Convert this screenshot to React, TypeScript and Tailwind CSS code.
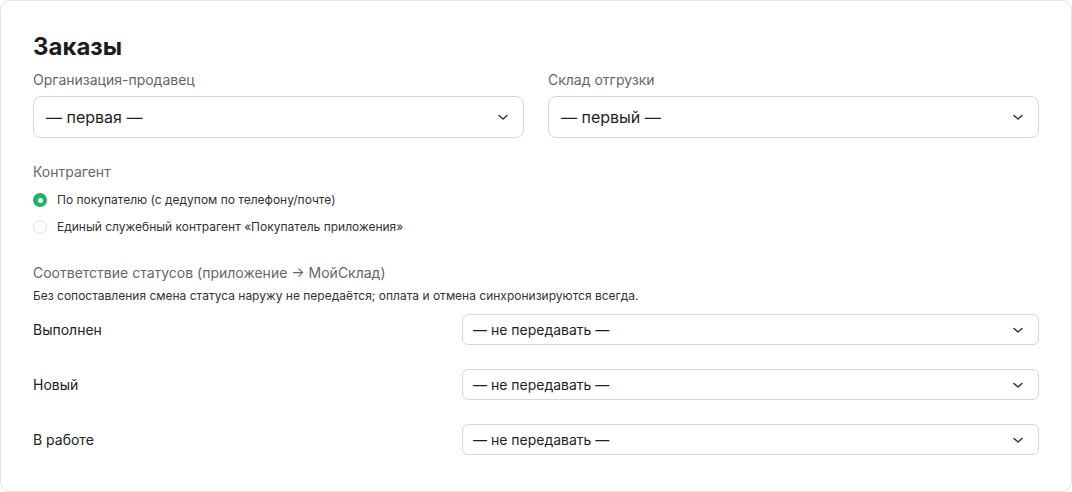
import { useState } from "react";

const Chevron = () => (
  <svg
    className="h-3 w-3 shrink-0 text-[#333]"
    viewBox="0 0 12 12"
    fill="none"
    stroke="currentColor"
    strokeWidth={1.5}
    strokeLinecap="round"
    strokeLinejoin="round"
  >
    <path d="M2 4.5l4 3.5 4-3.5" />
  </svg>
);

type SelectProps = {
  value: string;
  size?: "lg" | "sm";
};

// Имитация нативного селекта
const FakeSelect = ({ value, size = "lg" }: SelectProps) => (
  <div
    className={
      size === "lg"
        ? "flex h-[42px] items-center justify-between rounded-lg border border-[#d6d6d6] bg-white pl-3 pr-[14px] text-base text-[#1f1f1f]"
        : "flex h-[31px] items-center justify-between rounded-md border border-[#d6d6d6] bg-white pl-[10px] pr-[14px] text-sm text-[#1f1f1f]"
    }
  >
    <span>{value}</span>
    <Chevron />
  </div>
);

const Radio = ({
  checked,
  label,
  onClick,
}: {
  checked: boolean;
  label: string;
  onClick: () => void;
}) => (
  <button
    type="button"
    onClick={onClick}
    className="flex h-5 items-center gap-[10px] text-left text-xs text-[#333]"
  >
    {checked ? (
      <span className="flex h-[14px] w-[14px] items-center justify-center rounded-full bg-[#1fb463]">
        <span className="h-[5px] w-[5px] rounded-full bg-white" />
      </span>
    ) : (
      <span className="h-[14px] w-[14px] rounded-full border border-[#e2e2e2] bg-white" />
    )}
    <span>{label}</span>
  </button>
);

const statuses = ["Выполнен", "Новый", "В работе"];

export default function App() {
  const [counterparty, setCounterparty] = useState<"buyer" | "single">("buyer");

  return (
    <div className="font-['Inter','Noto_Sans',sans-serif] antialiased">
      <div className="h-[492px] w-[1072px] rounded-[10px] border border-[#e4e4e4] bg-white px-8 pt-[30px]">
        <h1 className="text-2xl leading-8 font-bold text-[#1c1c1c]">Заказы</h1>

        {/* Организация и склад */}
        <div className="mt-[7px] grid grid-cols-2 gap-x-6">
          <div>
            <div className="text-sm leading-5 text-[#666]">Организация-продавец</div>
            <div className="mt-[6px]">
              <FakeSelect value="— первая —" />
            </div>
          </div>
          <div>
            <div className="text-sm leading-5 text-[#666]">Склад отгрузки</div>
            <div className="mt-[6px]">
              <FakeSelect value="— первый —" />
            </div>
          </div>
        </div>

        {/* Контрагент */}
        <div className="mt-6">
          <div className="text-sm leading-5 text-[#666]">Контрагент</div>
          <div className="mt-[8px] flex flex-col gap-[7px]">
            <Radio
              checked={counterparty === "buyer"}
              label="По покупателю (с дедупом по телефону/почте)"
              onClick={() => setCounterparty("buyer")}
            />
            <Radio
              checked={counterparty === "single"}
              label="Единый служебный контрагент «Покупатель приложения»"
              onClick={() => setCounterparty("single")}
            />
          </div>
        </div>

        {/* Соответствие статусов */}
        <div className="mt-[26px]">
          <div className="text-sm leading-5 text-[#666]">
            Соответствие статусов (приложение → МойСклад)
          </div>
          <p className="mt-[5px] text-xs leading-4 text-[#333]">
            Без сопоставления смена статуса наружу не передаётся; оплата и отмена синхронизируются всегда.
          </p>
          <div className="mt-[10px] flex flex-col gap-6">
            {statuses.map((s) => (
              <div key={s} className="grid grid-cols-[1fr_577px] items-center">
                <span className="text-sm text-[#222]">{s}</span>
                <FakeSelect value="— не передавать —" size="sm" />
              </div>
            ))}
          </div>
        </div>
      </div>
    </div>
  );
}
